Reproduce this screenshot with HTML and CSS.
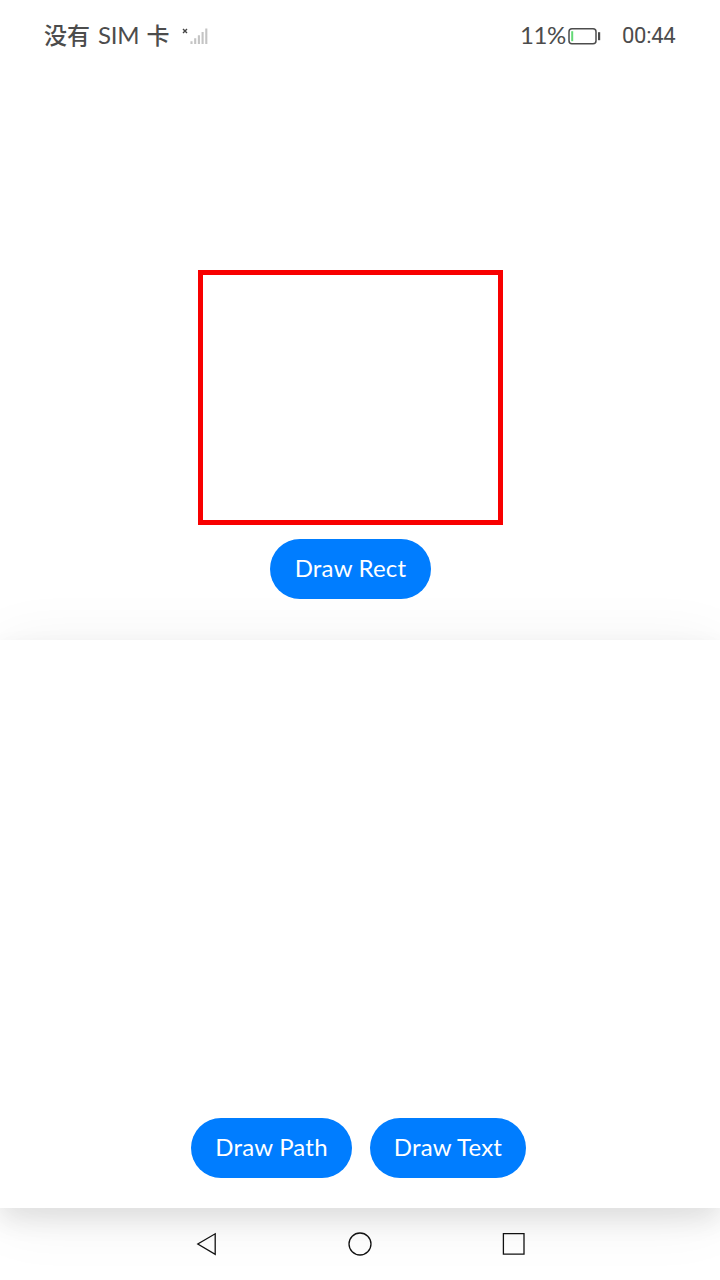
FILE: index.html
```html
<!DOCTYPE html>
<html lang="zh-CN">
<head>
<meta charset="utf-8">
<title>Draw</title>
<link rel="stylesheet" href="styles.css">
</head>
<body>
<header class="status">
  <span class="carrier">没有<span class="sim">SIM</span>卡</span>
  <svg class="signal" width="28" height="20" viewBox="0 0 28 20">
    <path d="M2 4l4 4M6 4l-4 4" stroke="#444" stroke-width="1.4"/>
    <path d="M10.5 16.2V19M14.2 13.2V19M17.9 10.2V19M21.6 7V19M25.3 3.5V19" stroke="#c4c4c4" stroke-width="2.1"/>
  </svg>
  <span class="percent">11%</span>
  <svg class="battery" width="33" height="18" viewBox="0 0 33 18">
    <rect x="1" y="1.7" width="27" height="15" rx="3" fill="none" stroke="#4c4c4c" stroke-width="1.5"/>
    <path d="M3.2 4.2h2v10h-2z" fill="#64d976"/>
    <path d="M30 5.2h2.2v8H30z" fill="#4c4c4c"/>
  </svg>
  <span class="clock">00:44</span>
</header>
<main class="upper">
  <div class="rect"></div>
  <button class="btn path">Draw Rect</button>
</main>
<section class="sheet">
  <button class="btn path">Draw Path</button>
  <button class="btn text">Draw Text</button>
</section>
<nav class="nav">
  <svg width="24" height="24" viewBox="0 0 24 24"><path d="M21.2 1.8v20.6L3.8 12z"/></svg>
  <svg width="24" height="24" viewBox="0 0 24 24"><circle cx="12" cy="12" r="11"/></svg>
  <svg width="24" height="24" viewBox="0 0 24 24"><path d="M1.4 1.6h20.6v20.6H1.4z"/></svg>
</nav>
</body>
</html>
```
FILE: styles.css
```css
* { box-sizing: border-box; }
body {
  margin: 0;
  width: 720px;
  height: 1280px;
  overflow: hidden;
  display: flex;
  flex-direction: column;
  background: #fff;
  font-family: Lato, "Noto Sans CJK SC", sans-serif;
}
.status {
  height: 72px;
  flex: none;
  display: flex;
  align-items: center;
  padding: 0 44px 2px;
  color: #4c4c4c;
  line-height: 30px;
  white-space: nowrap;
}
.carrier {
  width: 126px;
  font-size: 23px;
  font-weight: 500;
}
.sim { margin: 0 7px 0 8px; font-size: 24px; font-weight: 400; letter-spacing: -.2px; }
.signal { margin-left: 11px; }
.percent {
  margin-left: auto;
  width: 49px;
  font-size: 24px;
  letter-spacing: -.4px;
}
.battery { flex: none; margin: 2px 0 0 -1px; }
.clock {
  margin: 2px 0 0 21px;
  width: 54px;
  font: 400 22px/30px Roboto, sans-serif;
  letter-spacing: -.3px;
}
.upper {
  height: 568px;
  flex: none;
  display: flex;
  flex-direction: column;
  align-items: center;
  padding: 198px 18px 0 0;
}
.rect {
  width: 305px;
  height: 255px;
  flex: none;
  margin-right: 1px;
  border: 5px solid #f80000;
}
.btn {
  height: 60px;
  padding: 0 0 2px;
  border: 0;
  border-radius: 30px;
  background: #007dff;
  color: #fff;
  font: 400 24px/58px Lato, sans-serif;
  letter-spacing: .2px;
  white-space: nowrap;
}
.path { width: 161px; }
.text { width: 156px; }
.upper .btn { margin: 13.5px 1px 0 0; }
.sheet {
  height: 568px;
  flex: none;
  display: flex;
  justify-content: center;
  align-items: flex-end;
  gap: 18px;
  padding: 0 3px 30px 0;
  background: #fff;
  box-shadow: 0 12px 24px rgba(0, 0, 0, .09), 0 8px 60px rgba(0, 0, 0, .07);
}
.nav {
  position: relative;
  height: 72px;
  flex: none;
  display: flex;
  justify-content: center;
  align-items: center;
  gap: 130px;
}
.nav svg { fill: none; stroke: #111; stroke-width: 1.3; }
```
